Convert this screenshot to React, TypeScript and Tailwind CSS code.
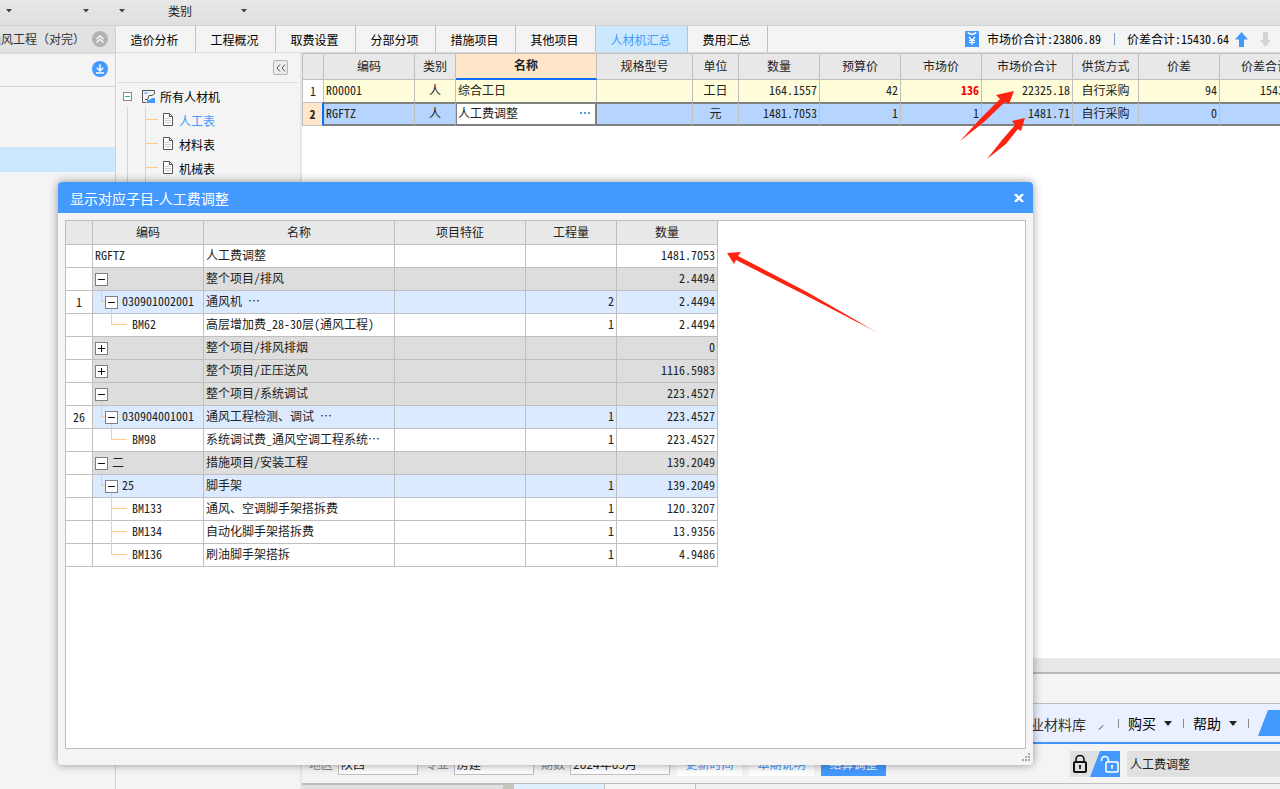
import React from 'react';

const SONG = 'font-["Noto_Sans_Mono_CJK_SC","Noto_Sans_CJK_SC",monospace]';

const TABS = ['造价分析', '工程概况', '取费设置', '分部分项', '措施项目', '其他项目', '人材机汇总', '费用汇总'];

const COLUMNS = [
  { name: '', width: 'w-[21px]' },
  { name: '编码', width: 'w-[91px]' },
  { name: '类别', width: 'w-[41px]' },
  { name: '名称', width: 'w-[141px]' },
  { name: '规格型号', width: 'w-[96px]' },
  { name: '单位', width: 'w-[46px]' },
  { name: '数量', width: 'w-[81px]' },
  { name: '预算价', width: 'w-[81px]' },
  { name: '市场价', width: 'w-[81px]' },
  { name: '市场价合计', width: 'w-[91px]' },
  { name: '供货方式', width: 'w-[66px]' },
  { name: '价差', width: 'w-[81px]' },
  { name: '价差合计', width: 'w-[91px]' },
];

type Kind = 'plain' | 'group' | 'item';

type DetailRow = {
  no?: string;
  code?: string;
  name: string;
  qty?: string;
  total: string;
  kind: Kind;
  level: number;
  open?: boolean;
  last?: boolean;
};

const DETAILS: DetailRow[] = [
  { code: 'RGFTZ', name: '人工费调整', total: '1481.7053', kind: 'plain', level: 0 },
  { name: '整个项目/排风', total: '2.4494', kind: 'group', level: 0, open: true },
  { no: '1', code: '030901002001', name: '通风机 …', qty: '2', total: '2.4494', kind: 'item', level: 1, open: true },
  { code: 'BM62', name: '高层增加费_28-30层(通风工程)', qty: '1', total: '2.4494', kind: 'plain', level: 2, last: true },
  { name: '整个项目/排风排烟', total: '0', kind: 'group', level: 0, open: false },
  { name: '整个项目/正压送风', total: '1116.5983', kind: 'group', level: 0, open: false },
  { name: '整个项目/系统调试', total: '223.4527', kind: 'group', level: 0, open: true },
  { no: '26', code: '030904001001', name: '通风工程检测、调试 …', qty: '1', total: '223.4527', kind: 'item', level: 1, open: true },
  { code: 'BM98', name: '系统调试费_通风空调工程系统…', qty: '1', total: '223.4527', kind: 'plain', level: 2, last: true },
  { code: '二', name: '措施项目/安装工程', total: '139.2049', kind: 'group', level: 0, open: true },
  { code: '25', name: '脚手架', qty: '1', total: '139.2049', kind: 'item', level: 1, open: true },
  { code: 'BM133', name: '通风、空调脚手架搭拆费', qty: '1', total: '120.3207', kind: 'plain', level: 2 },
  { code: 'BM134', name: '自动化脚手架搭拆费', qty: '1', total: '13.9356', kind: 'plain', level: 2 },
  { code: 'BM136', name: '刷油脚手架搭拆', qty: '1', total: '4.9486', kind: 'plain', level: 2, last: true },
];

const ROW_BG: Record<Kind, string> = {
  plain: 'bg-white',
  group: 'bg-[#dddddd]',
  item: 'bg-[#dceaff]',
};

function Caret({ className = '' }: { className?: string }) {
  return (
    <svg className={`shrink-0 ${className}`} width="6" height="4" viewBox="0 0 6 4" fill="#444">
      <path d="M0 0h6L3 3.5z" />
    </svg>
  );
}

function Toolbar() {
  return (
    <header className="h-[26px] shrink-0 flex items-center pb-1 bg-linear-to-b from-[#e8e8e8] to-[#dfdfdf] border-b border-[#d2d2d2]">
      <button aria-label="菜单一" className="pl-1.5"><Caret /></button>
      <button aria-label="菜单二" className="ml-[71px]"><Caret /></button>
      <button aria-label="菜单三" className="ml-[30px]"><Caret /></button>
      <button className="ml-[43px] flex items-center text-xs text-[#222]">
        类别
        <Caret className="ml-[49px]" />
      </button>
    </header>
  );
}

function ProjectPanel() {
  return (
    <aside className="w-[116px] shrink-0 flex flex-col bg-[#f4f4f4] border-r border-[#d2d2d2]">
      <div className="h-7 flex items-center bg-[#e2e2e2] border-b-2 border-[#dadada]">
        <div className="w-[85px] flex justify-end overflow-hidden text-xs text-[#333] whitespace-nowrap">通风工程（对完）</div>
        <button aria-label="收起" className="ml-[7px]">
          <svg width="16" height="16" viewBox="0 0 16 16" fill="none" stroke="#fff" strokeWidth="1.3">
            <circle cx="8" cy="8" r="8" fill="#b3b3b3" stroke="none" />
            <path d="M4.5 8L8 4.8 11.5 8M4.5 11.500L8 8.3l3.5 3.2" />
          </svg>
        </button>
      </div>
      <div className="h-[33px] flex items-center justify-end pr-[7px] pb-0.5 border-b border-[#d6d6d6]">
        <button aria-label="下载">
          <svg width="16" height="16" viewBox="0 0 16 16" fill="none" stroke="#fff" strokeWidth="1.5">
            <circle cx="8" cy="8" r="8" fill="#4499ff" stroke="none" />
            <path d="M8 3.5v6M4.8 6.8L8 10l3.2-3.2M4 12h8" />
          </svg>
        </button>
      </div>
      <div className="mt-[60px] h-[25px] bg-[#cce8ff]" />
    </aside>
  );
}

function DocIcon() {
  return (
    <svg width="10" height="13" viewBox="0 0 10 13" fill="#fff" stroke="#555">
      <path d="M.5.5H6.5l3 3v9h-9z" />
      <path d="M6.5.5v3h3" fill="none" />
      <path d="M2 5.5h5M2 7.5h6M2 9.5h6" stroke="#ccc" />
    </svg>
  );
}

function CategoryTree() {
  return (
    <nav className="w-[186px] shrink-0 flex flex-col bg-[#f4f4f4] border-r-2 border-[#e6e6e6]">
      <div className="mx-0.5 h-[30px] flex items-center justify-end pr-2.5 border-b border-[#dcdcdc]">
        <button aria-label="折叠" className="w-[15px] h-[15px] flex items-center justify-center rounded-xs border border-[#b4b4b4] bg-[#ececec]">
          <svg width="10" height="8" viewBox="0 0 10 8" fill="none" stroke="#555">
            <path d="M4 .5L1 4l3 3.5M9 .5L6 4l3 3.5" />
          </svg>
        </button>
      </div>
      <div className="mt-0.5 h-[22px] flex items-center pl-[7px] text-xs text-black">
        <button aria-label="收起所有人材机" className="w-[9px] h-[9px] flex items-center justify-center border border-[#888] bg-white">
          <span className="w-[5px] h-px bg-[#2aa5d8]" />
        </button>
        <svg className="ml-2.5" width="13" height="13" viewBox="0 0 13 13" fill="none" stroke="#555">
          <path d="M12.5 4V.5H.5v12h4" />
          <path d="M2 2h4v2H2z" fill="#9cc8ff" stroke="none" />
          <path d="M5 10l3-.5L10 8h3v5H5z" fill="#4499ff" stroke="none" />
          <path d="M3 9.5h2.500l1.500-4h3l2-1.500" />
        </svg>
        <a href="#all" className="ml-[5px] pt-0.5">所有人材机</a>
      </div>
      <div className="h-40 ml-[11px] border-l border-[#ffcb88]">
        <ul className="h-full ml-[17px] border-l border-[#ffcb88]">
          {['人工表', '材料表', '机械表'].map((name, i) => (
            <li key={name} className="h-6 flex items-center text-xs">
              <span className="w-3 h-px bg-[#ffcb88]" />
              <span className="ml-[5px]"><DocIcon /></span>
              <a href={`#table${i}`} className={`ml-1.5 pt-1 ${i === 0 ? 'text-[#4499ff]' : 'text-black'}`}>{name}</a>
            </li>
          ))}
        </ul>
      </div>
    </nav>
  );
}

function TabBar() {
  return (
    <div className="h-[27px] shrink-0 flex items-stretch bg-[#f4f4f4] border-b border-[#dadada] text-xs text-black">
      <div className="flex shrink-0" role="tablist">
        {TABS.map(t => (
          <button
            key={t}
            role="tab"
            aria-selected={t === '人材机汇总'}
            className={`pt-0.5 pr-0.5 border-r border-[#bfbfbf] ${t === '人材机汇总' ? 'w-[92px] bg-[#cce8ff] text-[#4499ff]' : 'w-20'}`}
          >
            {t}
          </button>
        ))}
      </div>
      <div className={`flex-1 flex items-center justify-end pr-[9px] whitespace-nowrap ${SONG}`}>
        <svg width="14" height="16" viewBox="0 0 14 16" fill="none" stroke="#fff">
          <path d="M0 0h14v16H0z" fill="#4499ff" stroke="none" />
          <path d="M3 1c1 3 7 3 8 0" strokeWidth="1.3" />
          <path d="M4 6l3 3.5L10 6M7 9v5M4 9.5h6M4 11.5h6" strokeWidth="1.2" />
        </svg>
        <span className="ml-2">市场价合计:23806.89</span>
        <span className="ml-[13px] w-px h-3 bg-[#7a9cc6]" />
        <span className="ml-3">价差合计:15430.64</span>
        <button aria-label="上移" className="ml-1.5">
          <svg width="13" height="15" viewBox="0 0 13 15" fill="#4499ff"><path d="M6.5 0L13 7.5H9V15H4V7.5H0z" /></svg>
        </button>
        <button aria-label="下移" className="ml-3">
          <svg width="11" height="15" viewBox="0 0 11 15" fill="#d4d4d4"><path d="M3 0h5v8h3l-5.5 7L0 8h3z" /></svg>
        </button>
      </div>
    </div>
  );
}

function ResourceTable() {
  const cell = 'border-r border-[#bfbfbf] px-0.5 pb-0.5';
  const picked = 'border-y-2 border-y-[#808080]';
  return (
    <table className={`w-[1009px] table-fixed border-separate border-spacing-0 border-l border-[#bfbfbf] text-xs leading-4 text-[#222] whitespace-nowrap ${SONG}`}>
      <thead>
        <tr className="h-[27px] bg-[#e8e8e8]">
          {COLUMNS.map(c => (
            <th
              key={c.name}
              className={`pb-0.5 border-t border-r border-[#bfbfbf] ${c.width} ${
                c.name === '名称' ? 'bg-[#ffe6c8] font-bold border-b-2 border-b-[#0a6cff]' : 'font-normal border-b'
              }`}
            >
              {c.name}
            </th>
          ))}
        </tr>
      </thead>
      <tbody>
        <tr className="h-[22px] bg-[#fffcd9]">
          <th className="p-0 bg-white border-r border-[#bfbfbf] font-normal">1</th>
          <td className={cell}>R00001</td>
          <td className={`${cell} text-center`}>人</td>
          <td className={cell}>综合工日</td>
          <td className={cell} />
          <td className={`${cell} text-center`}>工日</td>
          <td className={`${cell} text-right`}>164.1557</td>
          <td className={`${cell} text-right`}>42</td>
          <td className={`${cell} text-right font-bold text-[#f00000]`}>136</td>
          <td className={`${cell} text-right`}>22325.18</td>
          <td className={`${cell} text-center`}>自行采购</td>
          <td className={`${cell} text-right`}>94</td>
          <td className={`${cell} text-right`}>15430.64</td>
        </tr>
        <tr className="h-6 bg-[#b5d5ff]">
          <th className="p-0 bg-[#ffe6c8] border-y border-y-[#bfbfbf] border-r-2 border-r-[#0a6cff] font-bold">2</th>
          <td className={`${cell} ${picked}`}>RGFTZ</td>
          <td className={`${cell} ${picked} text-center`}>人</td>
          <td className="pb-0.5 bg-white border-y-2 border-r-2 border-l border-[#808080]">
            <div className="flex items-center">
              <input aria-label="名称" defaultValue="人工费调整" className="w-0 flex-1 h-4 pl-px outline-none" />
              <button aria-label="更多" className="pr-1">
                <svg width="11" height="3" viewBox="0 0 11 3" fill="#5b9bd5"><path d="M0 0h2v2H0zM4 0h2v2H4zM8 0h2v2H8z" /></svg>
              </button>
            </div>
          </td>
          <td className={`${cell} ${picked}`} />
          <td className={`${cell} ${picked} text-center`}>元</td>
          <td className={`${cell} ${picked} text-right`}>1481.7053</td>
          <td className={`${cell} ${picked} text-right`}>1</td>
          <td className={`${cell} ${picked} text-right`}>1</td>
          <td className={`${cell} ${picked} text-right`}>1481.71</td>
          <td className={`${cell} ${picked} text-center`}>自行采购</td>
          <td className={`${cell} ${picked} text-right`}>0</td>
          <td className={`${cell} ${picked} text-right`}>0</td>
        </tr>
      </tbody>
    </table>
  );
}

function MenuCaret() {
  return <svg width="8" height="5" viewBox="0 0 8 5" fill="#222"><path d="M0 0h8L4 5z" /></svg>;
}

function BottomPanel() {
  const field = 'h-[22px] px-0.5 bg-white border border-[#bfbfbf] text-[#222]';
  return (
    <div className="shrink-0 bg-[#f4f4f4]">
      <div className="h-[14px] bg-[#e8e8e8]" />
      <div className="h-[31px] border-t-2 border-[#b8b8b8]" />
      <div className="h-[41px] flex items-center justify-end bg-[#eaf0ff] border-t border-t-[#bfbfbf] border-b-2 border-b-[#3f96ff] text-sm text-black">
        <a href="#library" className="pt-0.5 text-[#333]">行业材料库</a>
        <svg className="ml-3 mt-2" width="6" height="5" viewBox="0 0 6 5" stroke="#333"><path d="M5 .5L1 4.5" /></svg>
        <span className="ml-[14px] w-px h-[9px] bg-[#888]" />
        <button className="ml-[9px] flex items-center gap-2">购买<MenuCaret /></button>
        <span className="ml-[11px] w-px h-[9px] bg-[#888]" />
        <button className="ml-[9px] flex items-center gap-2">帮助<MenuCaret /></button>
        <span className="ml-[11px] w-px h-[9px] bg-[#888]" />
        <svg className="ml-[9px]" width="22" height="26" viewBox="0 0 22 26" fill="#4499ff"><path d="M10 0h12v26H0z" /></svg>
      </div>
      <div className="h-[39px] flex items-center text-xs">
        <form className="flex items-center pl-[7px] text-[#888]">
          <label htmlFor="area">地区</label>
          <input id="area" defaultValue="陕西" className={`ml-[5px] w-20 ${field}`} />
          <label htmlFor="major" className="ml-[7px]">专业</label>
          <input id="major" defaultValue="房建" className={`ml-[5px] w-20 ${field}`} />
          <label htmlFor="period" className="ml-[7px]">期数</label>
          <input id="period" defaultValue="2024年05月" className={`ml-[5px] w-[100px] ${field}`} />
          <button type="button" className="ml-[7px] w-[65px] h-6 bg-white text-[#4499ff]">更新时间</button>
          <button type="button" className="ml-[7px] w-[65px] h-6 bg-white text-[#4499ff]">本期说明</button>
          <button type="button" className="ml-[7px] w-[65px] h-6 bg-[#4499ff] text-white">结算调整</button>
        </form>
        <div className="ml-auto flex items-center">
          <button aria-label="锁定">
            <svg width="50" height="26" viewBox="0 0 50 26" fill="none">
              <path d="M0 0h50v26H0z" fill="#e0e0e0" />
              <path d="M30 0h20v26H20z" fill="#4499ff" />
              <rect x="4" y="11" width="12" height="10" rx="1" stroke="#111" strokeWidth="2" />
              <path d="M6 11V8.5a4 4 0 018 0V11" stroke="#111" strokeWidth="1.6" />
              <path d="M10 14v4M9 15h2" stroke="#111" strokeWidth="1.6" />
              <rect x="36" y="11" width="12" height="10" rx="1" stroke="#fff" strokeWidth="1.6" />
              <path d="M38.5 11V9a3.5 3.5 0 00-7 0v1" stroke="#fff" strokeWidth="1.6" />
              <path d="M42 14v4M41 15h2" stroke="#fff" strokeWidth="1.4" />
            </svg>
          </button>
          <input aria-label="当前材料" readOnly value="人工费调整" className="ml-[7px] w-[153px] h-[26px] pl-[3px] bg-[#e0e0e0] text-[#222] outline-none" />
        </div>
      </div>
      <div className="h-[6px] flex border-t border-[#bfbfbf] bg-[#f1f1f1]">
        <span className="w-[201px] bg-[#e0e0e0] border-t border-[#bfbfbf]" />
        <span className="w-[11px] bg-[#c8c5c1]" />
        <span className="w-[91px] bg-[#e2efff] border-r border-[#bfbfbf]" />
        <span className="w-[91px] bg-[#f4f4f4] border-r border-[#bfbfbf]" />
      </div>
    </div>
  );
}

function Toggle({ open }: { open: boolean }) {
  return (
    <button
      aria-label={open ? '收起' : '展开'}
      className={`relative mr-1 w-[13px] h-[13px] shrink-0 flex items-center justify-center border border-[#808080] bg-white ${
        open ? 'after:absolute after:left-[5px] after:top-[12px] after:w-px after:h-[6px] after:bg-[#ffcb88]' : ''
      }`}
    >
      <svg width="7" height="7" viewBox="0 0 7 7" stroke="#111">
        <path d={open ? 'M0 3.5h7' : 'M0 3.5h7M3.5 0v7'} />
      </svg>
    </button>
  );
}

function CodeCell({ row }: { row: DetailRow }) {
  return (
    <div className="h-[22px] flex items-center pl-0.5">
      {row.level === 1 && <span className="ml-1.5 w-1 h-[11px] self-start border-l border-b border-[#ffcb88]" />}
      {row.level === 2 && (
        <span className={`ml-4 mr-[5px] w-4 self-start border-l border-[#ffcb88] ${row.last ? 'h-[11px]' : 'h-[23px]'}`}>
          <span className="block mt-2.5 h-px bg-[#ffcb88]" />
        </span>
      )}
      {row.open !== undefined && <Toggle open={row.open} />}
      <span className="pb-0.5">{row.code}</span>
    </div>
  );
}

function DetailDialog() {
  const line = 'border-r border-b border-[#bfbfbf]';
  return (
    <section
      role="dialog"
      aria-label="显示对应子目-人工费调整"
      className="absolute left-[58px] right-[247px] top-[182px] bottom-6 flex flex-col rounded-[4px] bg-[#f4f4f4] shadow-[0_0_10px_rgba(0,0,0,0.4)]"
    >
      <div className="h-[31px] shrink-0 flex items-center justify-between pl-3 pr-[9px] rounded-t-[4px] bg-[#4499ff] text-white text-sm">
        <h2>显示对应子目-人工费调整</h2>
        <button aria-label="关闭">
          <svg width="10" height="8" viewBox="0 0 10 8" stroke="#fff" strokeWidth="2.4"><path d="M1 0l8 8M9 0L1 8" /></svg>
        </button>
      </div>
      <div className="flex-1 mx-[7px] mt-[7px] border border-[#bfbfbf] bg-white overflow-hidden">
        <table className={`w-[652px] table-fixed border-separate border-spacing-0 text-xs leading-4 text-[#222] whitespace-nowrap ${SONG}`}>
          <thead>
            <tr className="h-6 bg-[#e8e8e8]">
              <th className={`w-[27px] p-0 ${line}`} />
              <th className={`w-[111px] pb-0.5 font-normal ${line}`}>编码</th>
              <th className={`w-[191px] pb-0.5 font-normal ${line}`}>名称</th>
              <th className={`w-[131px] pb-0.5 font-normal ${line}`}>项目特征</th>
              <th className={`w-[91px] pb-0.5 font-normal ${line}`}>工程量</th>
              <th className={`w-[101px] pb-0.5 font-normal ${line}`}>数量</th>
            </tr>
          </thead>
          <tbody>
            {DETAILS.map((row, i) => (
              <tr key={i} className={`h-[23px] ${ROW_BG[row.kind]}`}>
                <th className={`p-0 bg-white font-normal ${line}`}>{row.no}</th>
                <td className={`p-0 ${line}`}><CodeCell row={row} /></td>
                <td className={`pb-0.5 px-0.5 ${line}`}>{row.name}</td>
                <td className={`pb-0.5 px-0.5 ${line}`} />
                <td className={`pb-0.5 px-0.5 text-right ${line}`}>{row.qty}</td>
                <td className={`pb-0.5 px-0.5 text-right ${line}`}>{row.total}</td>
              </tr>
            ))}
          </tbody>
        </table>
      </div>
      <div className="h-4 shrink-0 flex items-center justify-end pr-[3px]">
        <svg width="8" height="8" viewBox="0 0 8 8" fill="#aaa">
          <path d="M6 0h2v2H6zM3 3h2v2H3zM6 3h2v2H6zM0 6h2v2H0zM3 6h2v2H3zM6 6h2v2H6z" />
        </svg>
      </div>
    </section>
  );
}

function Arrows() {
  return (
    <>
      <svg className="absolute left-[960px] top-[91px] pointer-events-none" width="66" height="69" viewBox="0 0 66 69" fill="#ff2412">
        <path d="M0 50L20 28 40 8l-4-4L54 0l-5 13-4-2-21 20z" />
        <path d="M27 68L42 49 55 34l-3-4 13-3-4 13-3-2-12 15z" />
      </svg>
      <svg className="absolute left-[727px] top-[252px] pointer-events-none" width="154" height="83" viewBox="0 0 154 83">
        <defs>
          <linearGradient id="fade" x1="0" x2="1">
            <stop offset="0.85" stopColor="#ff2412" />
            <stop offset="1" stopColor="#ff2412" stopOpacity="0.2" />
          </linearGradient>
        </defs>
        <path d="M0 1L14 0l-3 4 69 36 73 42L78 43 9 8 7 12z" fill="url(#fade)" />
      </svg>
    </>
  );
}

export default function App() {
  return (
    <div lang="zh-CN" className='relative h-screen overflow-hidden flex flex-col bg-[#f4f4f4] font-["Noto_Sans_CJK_SC",sans-serif]'>
      <Toolbar />
      <div className="flex-1 min-h-0 flex">
        <ProjectPanel />
        <div className="flex-1 min-w-0 flex flex-col">
          <TabBar />
          <div className="flex-1 min-h-0 flex">
            <CategoryTree />
            <main className="flex-1 min-w-0 flex flex-col bg-white">
              <div className="flex-1 min-h-0 overflow-hidden"><ResourceTable /></div>
              <BottomPanel />
            </main>
          </div>
        </div>
      </div>
      <DetailDialog />
      <Arrows />
    </div>
  );
}
